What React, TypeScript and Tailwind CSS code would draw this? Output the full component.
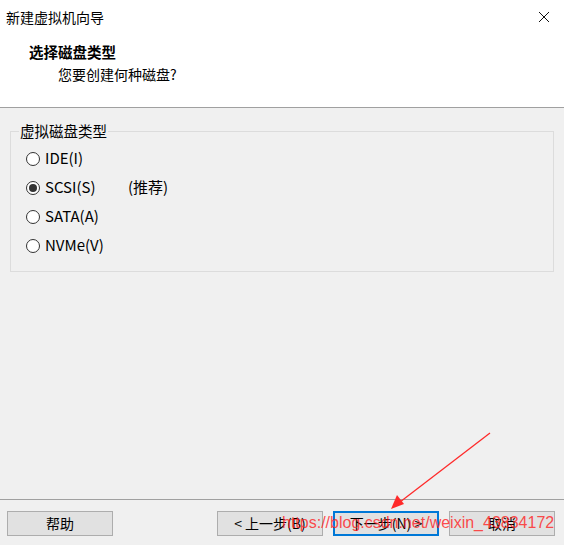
import React from 'react'

const font = { fontFamily: '"Noto Sans CJK SC", "Liberation Sans", sans-serif' }

interface RadioProps {
  label: string;
  checked?: boolean;
  note?: string;
}

const Radio = ({ label, checked, note }: RadioProps) => {
  return (
    <div className="h-[29px] flex items-center">
      <div className="w-[14px] h-[14px] rounded-full border border-[#333333] bg-white flex items-center justify-center ml-[15px]">
        {checked && <div className="w-[8px] h-[8px] rounded-full bg-[#333333]" />}
      </div>
      <span className="ml-[5px] text-[15px] text-black w-[83px]">{label}</span>
      {note && <span className="text-[15px] text-black">{note}</span>}
    </div>
  )
}

const Button = ({ label, primary }: { label: string; primary?: boolean }) => {
  return (
    <div
      className={
        primary
          ? 'w-[106px] h-[25px] bg-[#e1e1e1] border-2 border-[#0078d7] flex items-center justify-center text-[14px] text-black'
          : 'w-[106px] h-[25px] bg-[#e1e1e1] border border-[#adadad] flex items-center justify-center text-[14px] text-black'
      }
    >
      {label}
    </div>
  )
}

const App = () => {
  return (
    <div className="w-[564px] h-[545px] bg-[#f0f0f0] flex flex-col relative overflow-hidden" style={font}>
      {/* header */}
      <div className="h-[108px] bg-white border-b border-[#a0a0a0] flex flex-col">
        <div className="h-[34px] flex items-center justify-between pl-[6px] pr-[14px]">
          <span className="text-[14px] text-black">新建虚拟机向导</span>
          <svg width="12" height="12" viewBox="0 0 12 12">
            <path d="M1 1 L11 11 M11 1 L1 11" stroke="#111" strokeWidth="1" fill="none" />
          </svg>
        </div>
        <div className="pl-[29px] mt-[7px] text-[14.5px] font-bold text-black leading-[22px]">选择磁盘类型</div>
        <div className="pl-[58px] text-[14px] text-black leading-[23px]">您要创建何种磁盘?</div>
      </div>

      {/* content */}
      <div className="px-[10px] pt-[13px] flex-1">
        <fieldset className="border border-[#dcdcdc] pb-[11px]">
          <legend className="ml-[8px] px-[1px] text-[14.5px] text-black leading-[20px]">虚拟磁盘类型</legend>
          <div className="pt-[3px]">
            <Radio label="IDE(I)" />
            <Radio label="SCSI(S)" checked note="(推荐)" />
            <Radio label="SATA(A)" />
            <Radio label="NVMe(V)" />
          </div>
        </fieldset>
      </div>

      {/* footer */}
      <div className="h-[46px] border-t border-[#a0a0a0] flex items-start pt-[11px] pl-[7px] pr-[9px]">
        <Button label="帮助" />
        <div className="flex-1" />
        <div className="flex gap-[10px]">
          <Button label="< 上一步(B)" />
          <Button label="下一步(N) >" primary />
          <Button label="取消" />
        </div>
      </div>

      {/* watermark + arrow */}
      <div
        className="absolute left-[282px] top-[512px] text-[16px] text-[#ff2020]/80 leading-[22px] whitespace-nowrap"
        style={{ fontFamily: '"Liberation Sans", sans-serif' }}
      >
        https://blog.csdn.net/weixin_43834172
      </div>
      <svg className="absolute left-0 top-0" width="564" height="545" viewBox="0 0 564 545">
        <line x1="490" y1="433" x2="400" y2="502" stroke="#ff2a2a" strokeWidth="1.3" />
        <path d="M391 509 L397 495 L404 504 Z" fill="#ff2a2a" />
      </svg>
    </div>
  )
}

export default App
